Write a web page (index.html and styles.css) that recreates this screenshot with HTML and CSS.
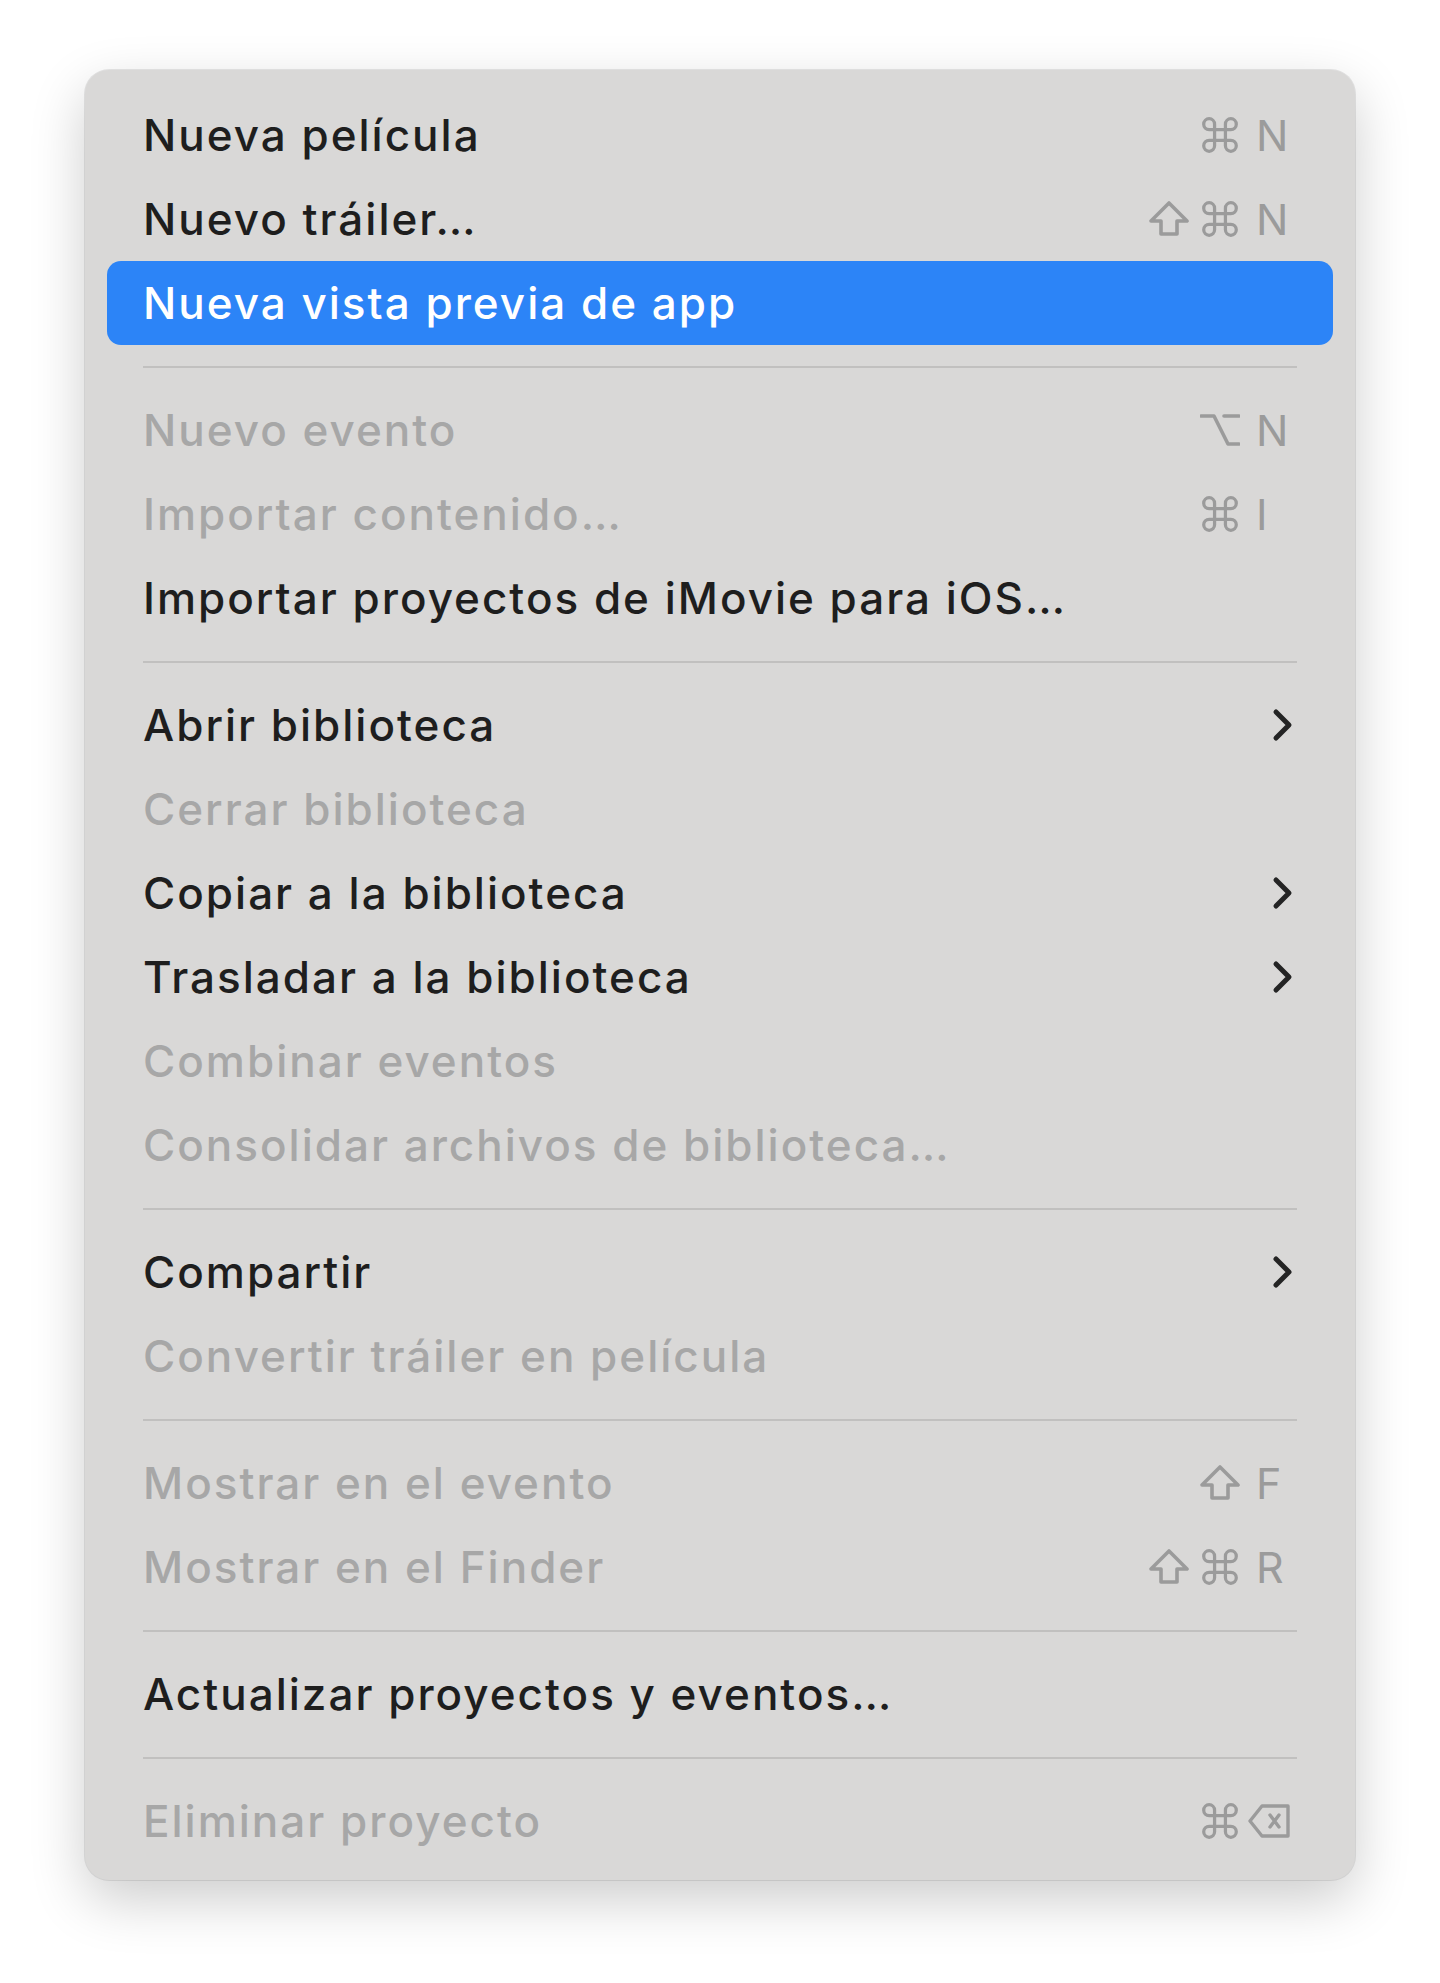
FILE: index.html
```html
<!DOCTYPE html>
<html lang="es">
<head>
  <meta charset="UTF-8" />
  <meta name="viewport" content="width=device-width, initial-scale=1.0"/>
  <title>Archivo</title>
  <link rel="stylesheet" href="styles.css">
</head>
<body>
  <div class="page">
    <div class="menu">
      <div class="item">
        <span class="label">Nueva película</span>
        <span class="mods"><svg class="ico" viewBox="-3 -3 42 42"><path d="M12 12V6a6 6 0 1 0-6 6H30a6 6 0 1 0-6-6V30a6 6 0 1 0 6-6H6a6 6 0 1 0 6 6Z"/></svg></span>
        <span class="key">N</span>
      </div>
      <div class="item">
        <span class="label">Nuevo tráiler…</span>
        <span class="mods">
          <svg class="ico" viewBox="0 0 40 36"><path d="M20 2L38 20H28V33H12V20H2Z"/></svg>
          <svg class="ico" viewBox="-3 -3 42 42"><path d="M12 12V6a6 6 0 1 0-6 6H30a6 6 0 1 0-6-6V30a6 6 0 1 0 6-6H6a6 6 0 1 0 6 6Z"/></svg>
        </span>
        <span class="key">N</span>
      </div>
      <div class="item active">
        <span class="label">Nueva vista previa de app</span>
      </div>

      <div class="sep"></div>

      <div class="item disabled">
        <span class="label">Nuevo evento</span>
        <span class="mods"><svg class="ico" viewBox="0 0 40 36"><path d="M1 4H14L28 32H39M24 4H39"/></svg></span>
        <span class="key">N</span>
      </div>
      <div class="item disabled">
        <span class="label">Importar contenido…</span>
        <span class="mods"><svg class="ico" viewBox="-3 -3 42 42"><path d="M12 12V6a6 6 0 1 0-6 6H30a6 6 0 1 0-6-6V30a6 6 0 1 0 6-6H6a6 6 0 1 0 6 6Z"/></svg></span>
        <span class="key">I</span>
      </div>
      <div class="item">
        <span class="label">Importar proyectos de iMovie para iOS…</span>
      </div>

      <div class="sep"></div>

      <div class="item">
        <span class="label">Abrir biblioteca</span>
        <svg class="arrow" viewBox="0 0 21 34"><path d="M4 4L17 17L4 30"/></svg>
      </div>
      <div class="item disabled">
        <span class="label">Cerrar biblioteca</span>
      </div>
      <div class="item">
        <span class="label">Copiar a la biblioteca</span>
        <svg class="arrow" viewBox="0 0 21 34"><path d="M4 4L17 17L4 30"/></svg>
      </div>
      <div class="item">
        <span class="label">Trasladar a la biblioteca</span>
        <svg class="arrow" viewBox="0 0 21 34"><path d="M4 4L17 17L4 30"/></svg>
      </div>
      <div class="item disabled">
        <span class="label">Combinar eventos</span>
      </div>
      <div class="item disabled">
        <span class="label">Consolidar archivos de biblioteca…</span>
      </div>

      <div class="sep"></div>

      <div class="item">
        <span class="label">Compartir</span>
        <svg class="arrow" viewBox="0 0 21 34"><path d="M4 4L17 17L4 30"/></svg>
      </div>
      <div class="item disabled">
        <span class="label">Convertir tráiler en película</span>
      </div>

      <div class="sep"></div>

      <div class="item disabled">
        <span class="label">Mostrar en el evento</span>
        <span class="mods"><svg class="ico" viewBox="0 0 40 36"><path d="M20 2L38 20H28V33H12V20H2Z"/></svg></span>
        <span class="key">F</span>
      </div>
      <div class="item disabled">
        <span class="label">Mostrar en el Finder</span>
        <span class="mods">
          <svg class="ico" viewBox="0 0 40 36"><path d="M20 2L38 20H28V33H12V20H2Z"/></svg>
          <svg class="ico" viewBox="-3 -3 42 42"><path d="M12 12V6a6 6 0 1 0-6 6H30a6 6 0 1 0-6-6V30a6 6 0 1 0 6-6H6a6 6 0 1 0 6 6Z"/></svg>
        </span>
        <span class="key">R</span>
      </div>

      <div class="sep"></div>

      <div class="item">
        <span class="label">Actualizar proyectos y eventos…</span>
      </div>

      <div class="sep"></div>

      <div class="item disabled">
        <span class="label">Eliminar proyecto</span>
        <span class="mods"><svg class="ico" viewBox="-3 -3 42 42"><path d="M12 12V6a6 6 0 1 0-6 6H30a6 6 0 1 0-6-6V30a6 6 0 1 0 6-6H6a6 6 0 1 0 6 6Z"/></svg></span>
        <span class="key"><svg class="del" viewBox="0 0 42 36"><path d="M14 3H40V33H14L2 18Z M22 12L31 24M31 12L22 24"/></svg></span>
      </div>
    </div>
  </div>
</body>
</html>
```

FILE: styles.css
```css
* {
  box-sizing: border-box;
}
body {
  margin: 0;
  background: #fff;
  font-family: Inter, 'Noto Sans', sans-serif;
}
.page {
  padding: 70px 0 80px 85px;
}
.menu {
  width: 1270px;
  padding: 23px 22px 17px;
  background: #d9d8d7;
  border-radius: 24px;
  box-shadow: 0 0 0 1px rgba(0,0,0,0.09), 0 20px 55px rgba(0,0,0,0.2);
}
.item {
  display: flex;
  align-items: center;
  height: 84px;
  padding: 0 36px;
  border-radius: 14px;
  font-size: 44px;
  color: #1e1e1e;
}
.item.disabled {
  color: #a7a7a7;
}
.item.active {
  background: #2c84f7;
  color: #fff;
}
.label {
  flex: 1;
  white-space: nowrap;
  font-weight: 500;
  letter-spacing: 2px;
}
.mods {
  display: flex;
  align-items: center;
  gap: 11px;
}
.ico {
  width: 40px;
  height: 38px;
  fill: none;
  stroke: #9b9b9b;
  stroke-width: 3.6;
  stroke-linejoin: round;
  stroke-linecap: round;
}
.key {
  width: 41px;
  margin-left: 16px;
  font-size: 43px;
  color: #9b9b9b;
  display: flex;
  align-items: center;
}
.del {
  width: 42px;
  height: 36px;
  margin-left: -8px;
  fill: none;
  stroke: #9b9b9b;
  stroke-width: 3.4;
  stroke-linejoin: round;
  stroke-linecap: round;
}
.arrow {
  width: 21px;
  height: 34px;
  margin-right: 4px;
  fill: none;
  stroke: #242424;
  stroke-width: 5;
  stroke-linecap: round;
  stroke-linejoin: round;
}
.sep {
  height: 43px;
  display: flex;
  align-items: center;
  padding: 0 36px;
}
.sep::before {
  content: "";
  flex: 1;
  height: 2px;
  background: #c1c0bf;
}
```
